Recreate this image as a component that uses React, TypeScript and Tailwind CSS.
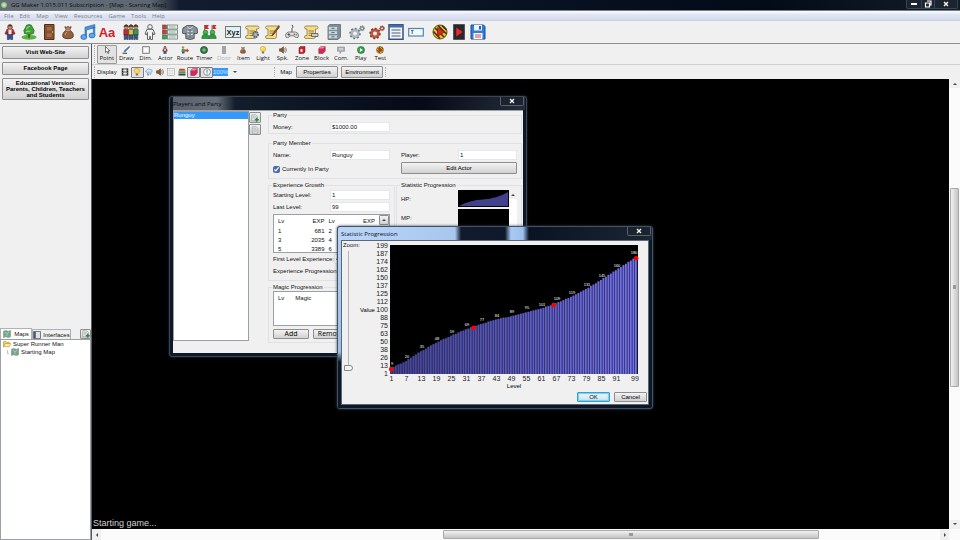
import React, { useState } from 'react';

type IconProps = { name: string; className?: string }

// All of the toolbar art, drawn on a 16x16 grid
const ART: Record<string, React.ReactNode> = {
  actor: (
    <>
      <path d="M5 5.200h6l2 4.600-1.500.6-1-2.200V11H5.500V8.200l-1 2.200-1.500-.6z" fill="#d8262a" stroke="#4a1818" strokeWidth=".6" />
      <path d="M6.500 5.200h3V11h-3z" fill="#e8ecf2" />
      <path d="M5.400 10.500h5.200v5H8.700l-.7-3-.7 3H5.400z" fill="#2e559c" stroke="#1b2b50" strokeWidth=".6" />
      <circle cx="8" cy="2.900" r="2.300" fill="#d89a74" stroke="#3b2317" strokeWidth=".7" />
      <path d="M5.700 2.500Q8-1 10.300 2.500z" fill="#56321e" />
    </>
  ),
  tree: (
    <>
      <ellipse cx="8" cy="13.300" rx="7.500" ry="2.500" fill="#52b544" />
      <path d="M7 9h2v5H7z" fill="#7b4b24" />
      <path d="M3.500 9.500Q1.800 6 4.400 3.800 5 .5 8 .5t3.600 3.300Q14.200 6 12.500 9.500 8 11.800 3.500 9.500z" fill="#3fa33a" stroke="#1e6424" strokeWidth=".7" />
      <path d="M5.500 5Q6.500 2.300 9 2.500M5 8q2-1.500 4-.5" stroke="#93dc70" strokeWidth="1.200" fill="none" />
    </>
  ),
  door: (
    <>
      <path d="M3.500.5h9.500v15H3.500z" fill="#8b5734" stroke="#4f2d18" />
      <path d="M5.300 2.500h5.900v4.500H5.300zM5.300 8.800h5.900v4.800H5.300z" fill="#a46c43" stroke="#69402a" strokeWidth=".6" />
      <circle cx="11.600" cy="8" r=".8" fill="#e9cb58" />
    </>
  ),
  doorOff: <path d="M4 0h8v16H4z" fill="#a5a5a5" />,
  bag: (
    <>
      <path d="M6.300 6Q1.500 9.500 3 13q1 1.700 5 1.700t5-1.700Q14.500 9.500 9.700 6z" fill="#94613f" stroke="#4c2b1a" strokeWidth=".8" />
      <path d="m6.200 6-1.400-3.300 2 .6L8 2.200l1.200 1.100 2-.6L9.800 6z" fill="#b98259" stroke="#4c2b1a" strokeWidth=".7" />
      <path d="M6 6.200h4" stroke="#e3c9a0" strokeWidth="1" />
      <path d="M5 11q.5-2 2-2.800" stroke="#d1a27c" fill="none" />
    </>
  ),
  music: (
    <>
      <path d="M5 3.200 14.800.5v3.200L6.500 6v7H5zM13.300 3h1.500v8.500h-1.500z" fill="#4c94dc" stroke="#1d5fae" strokeWidth=".6" />
      <ellipse cx="3.800" cy="13" rx="3" ry="2.400" fill="#5ba9ee" stroke="#1d5fae" strokeWidth=".7" />
      <ellipse cx="12" cy="11.500" rx="3" ry="2.400" fill="#5ba9ee" stroke="#1d5fae" strokeWidth=".7" />
    </>
  ),
  font: <text x="8" y="12.500" textAnchor="middle" fontSize="13" fontWeight="bold" fill="#cf2228" fontFamily="Liberation Sans, sans-serif">Aa</text>,
  party: (
    <>
      {[3.200, 8, 12.800].map((x, i) => (
        <g key={x} stroke="#2f2622" strokeWidth=".5">
          <circle cx={x} cy="3" r="2.100" fill="#d5986e" />
          <path d={`M${x - 2.400} 5.500h4.800V11h-4.800z`} fill={['#c8282b', '#e4c33c', '#35975b'][i]} />
          <path d={`M${x - 2} 11h4v4.500h-1.500l-.5-2.500-.5 2.500h-1.500z`} fill="#355da2" />
          <path d={`M${x - 2.100} 2.400q2.100-3.500 4.200 0z`} fill="#5b3420" />
        </g>
      ))}
    </>
  ),
  pose: (
    <g fill="#f1f1f1" stroke="#555" strokeWidth=".9">
      <circle cx="8" cy="2.900" r="2.300" />
      <path d="M5 5.300h6l2 4.800-1.500.6-1-2.200v7H8.700L8 12l-.7 3.500H5.500v-7l-1 2.200-1.500-.6z" />
    </g>
  ),
  stats: (
    <>
      {[1, 6, 11].map((y, i) => (
        <g key={y}>
          <rect x=".5" y={y} width="4" height="4" fill={['#d33', '#d33', '#41a948'][i]} stroke="#4a5552" strokeWidth=".6" />
          <rect x="5.500" y={y} width="10" height="4" fill="#e3f0e8" stroke="#6b7673" strokeWidth=".8" />
          <path d={`M7 ${y + 2}h6.500`} stroke="#8fb8a0" strokeWidth="1" />
        </g>
      ))}
    </>
  ),
  armor: (
    <>
      <path d="M5 1.500h6l4 2.500.8 5-3 1-.6-1v5.500q-4.200 2-8.400 0V9l-.6 1-3-1L1 4z" fill="#87929a" stroke="#3c464c" strokeWidth=".8" />
      <path d="M5 2.500 8 5l3-2.500M5 7q3 2 6 0M5 10q3 2 6 0" stroke="#d2dce2" strokeWidth="1" fill="none" />
      <path d="M8 5v9" stroke="#4c585f" strokeWidth=".7" />
    </>
  ),
  teams: (
    <>
      <path d="M3.500 1v8M11 1v8" stroke="#555" strokeWidth=".8" />
      <path d="M4 1h4L6.500 3 8 5H4z" fill="#d7262b" />
      <path d="M11.500 1h4L14 3l1.500 2h-4z" fill="#d7262b" />
      <circle cx="4.500" cy="8.300" r="2.300" fill="#45b74c" stroke="#1f6c2c" strokeWidth=".6" />
      <circle cx="11.500" cy="8.300" r="2.300" fill="#45b74c" stroke="#1f6c2c" strokeWidth=".6" />
      <path d="M.8 14.500q0-4.500 3.700-4.500T8 14.500q0-4.500 3.500-4.500t3.700 4.500z" fill="#2e9a3a" stroke="#1f6c2c" strokeWidth=".6" />
    </>
  ),
  xyz: (
    <>
      <rect x=".5" y="2.500" width="15" height="11" fill="#e3f0f4" stroke="#6a7980" />
      <text x="8" y="10.800" textAnchor="middle" fontSize="7.500" fontWeight="bold" fill="#222" fontFamily="Liberation Sans, sans-serif">Xyz</text>
    </>
  ),
  scroll: (
    <>
      <path d="M3 2h10.500q1.500 0 1.500 1.500T13.500 5h-1v7.500q0 2-2 2H3q-1.500 0-1.500-1.500T3 11.500h1V5H3Q1.500 4.800 1.500 3.500T3 2z" fill="#f3dc8a" stroke="#8f763c" strokeWidth=".8" />
      <path d="M5.500 7h5.500M5.500 9.200h5.500M5.500 11.500h3.500" stroke="#8b7136" strokeWidth=".9" />
    </>
  ),
  gear: (
    <>
      <circle cx="6" cy="9.500" r="3.500" fill="none" stroke="#a9b8be" strokeWidth="3" />
      <circle cx="6" cy="9.500" r="5" fill="none" stroke="#66767d" strokeWidth="1.500" strokeDasharray="1.800 2" />
      <circle cx="13" cy="4.300" r="1.600" fill="none" stroke="#7f9097" strokeWidth="1.400" />
      <circle cx="13" cy="4.300" r="2.400" fill="none" stroke="#5c6c73" strokeWidth="1" strokeDasharray="1 1" />
    </>
  ),
  gearRed: (
    <>
      <circle cx="6" cy="9.500" r="3.500" fill="none" stroke="#c0573c" strokeWidth="3" />
      <circle cx="6" cy="9.500" r="5" fill="none" stroke="#74352a" strokeWidth="1.500" strokeDasharray="1.800 2" />
      <circle cx="13" cy="4.300" r="1.600" fill="none" stroke="#a9543c" strokeWidth="1.400" />
      <circle cx="13" cy="4.300" r="2.400" fill="none" stroke="#6e4a3c" strokeWidth="1" strokeDasharray="1 1" />
    </>
  ),
  joystick: (
    <>
      <path d="M8 8V4.500Q10 3.500 8 .8" stroke="#555" strokeWidth="1" fill="none" />
      <path d="M4.500 8h7q3 .8 3 3.500t-2 2q-1.500.3-2.500-1.700H6q-1 2-2.500 1.700-2 .5-2-2T4.500 8z" fill="#d9dddd" stroke="#596264" strokeWidth=".8" />
      <path d="M4.800 9.200v2.600M3.500 10.500h2.600" stroke="#444" strokeWidth=".9" />
      <circle cx="10.400" cy="10.300" r=".8" fill="#d6302d" />
      <circle cx="12.300" cy="10.800" r=".8" fill="#3a9c49" />
    </>
  ),
  cabinet: (
    <>
      <path d="M2 2 4 .5h10.500V13L12 15.500H2z" fill="#7f8e96" stroke="#5c696f" strokeWidth=".8" />
      {[2.500, 6.800, 11].map((y) => (
        <g key={y}>
          <rect x="2.500" y={y} width="9" height="3.700" fill="#c9d8df" stroke="#77868d" strokeWidth=".7" />
          <path d={`M5.500 ${y + 1.800}h3`} stroke="#56646b" />
        </g>
      ))}
    </>
  ),
  listBox: (
    <>
      <rect x="1" y=".8" width="14" height="14.500" fill="#eef4fb" stroke="#34507f" strokeWidth="1.500" />
      <path d="M1 1h14v2.500H1z" fill="#3a6cb4" />
      <path d="M3.500 6h9M3.500 9h9M3.500 12h9" stroke="#555f70" strokeWidth="1.200" />
    </>
  ),
  textBox: (
    <>
      <rect x=".7" y="4.500" width="14.600" height="7.500" fill="#f4f9fe" stroke="#4a86bd" strokeWidth="1.200" />
      <path d="M3 6.500h2.500M4.200 6.500V10" stroke="#555" strokeWidth=".9" />
    </>
  ),
  playTest: (
    <>
      <circle cx="8" cy="8" r="7" fill="#f0c81e" stroke="#4b3d12" strokeWidth=".9" />
      <path d="M3 4l9 9M1.500 7.500l6.500 7M6 1.600l8.500 8.400M10 1.500l4.500 4.500" stroke="#33301f" strokeWidth="1.500" />
      <path d="M5.500 3.500 12.500 8l-7 4.500z" fill="#e02424" stroke="#7d1414" strokeWidth=".7" />
    </>
  ),
  playDark: (
    <>
      <path d="M2.500.5h11v15h-11z" fill="#26282d" stroke="#52555c" />
      <path d="M5.200 3.500 11.700 8l-6.500 4.500z" fill="#ee2424" />
    </>
  ),
  save: (
    <>
      <path d="M1 1h12.500L15 2.500V15H1z" fill="#2e7fd6" stroke="#1b4a93" />
      <path d="M4 1h8v5.500H4z" fill="#eef3fa" />
      <path d="M9 2h2v3.500H9z" fill="#2562ae" />
      <path d="M3.500 9h9v6h-9z" fill="#f7f7f7" />
      <path d="M5 11h6M5 13h6" stroke="#d43a35" strokeWidth=".9" />
    </>
  ),
  pointer: <path d="M5 1v12l3-2.500 2 4.500 2-1-2-4.300h3.800z" fill="#fff" stroke="#333" strokeWidth="1.300" />,
  draw: (
    <>
      <path d="M14.500.5 15.500 2 7 11l-3 1 1-3z" fill="#3d7ac4" stroke="#274a7a" strokeWidth=".8" />
      <path d="M1 14.500h9" stroke="#333" strokeWidth="2" />
    </>
  ),
  dim: <rect x="1.500" y="1.500" width="13" height="13" fill="#fafafa" stroke="#5c5c5c" strokeWidth="1.600" />,
  route: (
    <>
      <circle cx="4" cy="3" r="2.500" fill="#c2834f" />
      <path d="M1.500 6H7l1 6H1z" fill="#3e9e4a" />
      <path d="M7 7h5V5l4 4-4 4v-2H7z" fill="#d2362e" />
      <path d="M2 12h5v3H2z" fill="#34558f" />
    </>
  ),
  timer: (
    <>
      <circle cx="8" cy="8" r="7" fill="#2f7446" stroke="#31413a" strokeWidth="1.500" />
      <path d="M8 3.500v9M3.500 8h9" stroke="#6fdc76" strokeWidth="2" />
    </>
  ),
  light: (
    <>
      <path d="M8 .7q5.500 0 5.500 5.300 0 2.500-3 5h-5q-3-2.500-3-5Q2.500.7 8 .7z" fill="#fbd54c" stroke="#b68a24" strokeWidth=".9" />
      <path d="M5.700 11h4.600v4H5.700z" fill="#777" />
      <path d="M5.500 5q.5-2 2.500-2.300" stroke="#fff" strokeWidth="1.400" fill="none" />
    </>
  ),
  speaker: (
    <>
      <path d="M1 5.500h3L9 1.500v13l-5-4H1z" fill="#87582f" stroke="#46301e" />
      <path d="M11 4.500q2.500 3.500 0 7M13 2.500q4 5.500 0 11" stroke="#555" strokeWidth="1.300" fill="none" />
    </>
  ),
  zone: (
    <>
      <path d="M2 3.500 5.500.8H14V12l-3 3.200H2z" fill="#c52127" stroke="#6b1216" />
      <path d="M5 6h4v6H5z" fill="#fbe4e4" />
    </>
  ),
  block: (
    <>
      <path d="M1.500 5 6 1h8.500v9L10 15H1.500z" fill="#d22a55" stroke="#8e1c3f" />
      <path d="M1.500 5 6 1h8.500L10 5z" fill="#f08aa4" />
    </>
  ),
  comment: (
    <>
      <path d="M1 2h14v8.500H9L6 15v-4.500H1z" fill="#a9b3bb" stroke="#727c83" />
      <path d="M4 5h8M4 7.500h8" stroke="#f2f2f2" />
    </>
  ),
  play: (
    <>
      <circle cx="8" cy="8" r="7.200" fill="#2da043" stroke="#1a6b2d" />
      <path d="M5.700 4 12 8l-6.300 4z" fill="#fff" />
    </>
  ),
  film: (
    <>
      <path d="M3 .5v15M13 .5v15" stroke="#222" strokeWidth="3" />
      <path d="M3 2h10M3 8h10M3 14h10" stroke="#222" strokeWidth="1.500" />
      <path d="M3 1v15M13 1v15" stroke="#ddd" strokeDasharray="1.500 2" />
    </>
  ),
  weather: (
    <>
      <path d="M2 8.500Q0 5 4 4q2-3.500 6-1.500 4.500 0 4.500 3.500 0 2-2 2.500z" fill="#d8e7f7" stroke="#5d8dc6" strokeWidth="1.200" />
      <path d="M5 10v4M8 10.500l-2 5M12 10l-2 4" stroke="#3f86d1" strokeWidth="1.500" />
    </>
  ),
  grid: (
    <>
      <rect x="1" y="1" width="14" height="14" fill="#fff" stroke="#8c8c8c" />
      <path d="M5.500 1v14M10.500 1v14M1 5.500h14M1 10.500h14" stroke="#b9b9b9" />
    </>
  ),
  layers: (
    <>
      <path d="M3 1.500h10l2 4H1z" fill="#de3830" />
      <path d="M1 6.500h14v3.500H1z" fill="#3ba349" />
      <path d="M1 11h14v4H1z" fill="#37404b" />
    </>
  ),
  info: (
    <>
      <circle cx="8" cy="8" r="6.800" fill="#f5f8fa" stroke="#596671" strokeWidth="1.300" />
      <path d="M8 3.500v6M8 11v2" stroke="#44545f" strokeWidth="1.600" />
    </>
  ),
  map: (
    <>
      <path d="M.8 2.500 5 1l6 1.500L15.200 1v12.500L11 15l-6-1.500L.8 15z" fill="#5aa7dd" stroke="#b08b3a" strokeWidth="1.300" />
      <path d="M3 7q3-2 5 0t5 0v4q-3 2-5-.5t-5 .5z" fill="#68b552" />
      <path d="m4 4 4 4 4-4M8 8v4" stroke="#f3d25e" strokeWidth="1.300" fill="none" />
    </>
  ),
  iface: (
    <>
      <path d="M1 1h14v14H1z" fill="#d7e4ee" stroke="#444d55" strokeWidth="1.400" />
      <path d="M1.500 1.500h4v13h-4z" fill="#45525c" />
      <path d="M3 3.500h1M3 6.500h1M3 9.500h1" stroke="#e15349" strokeWidth="1.500" />
    </>
  ),
  folder: (
    <>
      <path d="M1 13.500V3h5l1.500 2H13v2" fill="#f5d56c" stroke="#a67c20" />
      <path d="M1 13.500 4 7h11.500l-3 6.500z" fill="#fce99b" stroke="#a67c20" />
    </>
  ),
  page: (
    <>
      <path d="M2.500 1.500h8l3 3v10h-11z" fill="#e6ecec" stroke="#76807f" />
      <path d="M4.500 5.500h6M4.500 8h7M4.500 10.500h7" stroke="#87918f" />
    </>
  ),
  pageAdd: (
    <>
      <path d="M1.500 1.500h8l3 3v9h-11z" fill="#e6ecec" stroke="#76807f" />
      <path d="M3.500 5.500h6M3.500 8h6" stroke="#87918f" />
      <path d="M11.500 7.500v8M7.500 11.500h8" stroke="#2c8a38" strokeWidth="2.800" />
    </>
  ),
}

// Scroll variants share the same parchment
ART.scrollGear = (
  <>
    {ART.scroll}
    <circle cx="11.500" cy="10.500" r="2.500" fill="#a9b8be" stroke="#55646b" strokeWidth="2" strokeDasharray="1.500 .6" />
  </>
)
ART.scrollPen = (
  <>
    {ART.scroll}
    <path d="M14.800 1.500 9 9.500l-1 2 2-1.200L15.600 2.500z" fill="#9a5a2b" stroke="#4e2d16" strokeWidth=".6" />
  </>
)
ART.scrollKey = (
  <>
    {ART.scroll}
    <path d="M8.500 9.500h6.500v3H8.500z" fill="#c7ced1" stroke="#555" strokeWidth=".8" />
  </>
)

function Icon({ name, className = 'w-4 h-4' }: IconProps) {
  return (
    <svg viewBox="0 0 16 16" className={`shrink-0 ${className}`} aria-hidden="true">
      {ART[name]}
    </svg>
  )
}

const MENUS = ['File', 'Edit', 'Map', 'View', 'Resources', 'Game', 'Tools', 'Help']

const TOOL_GROUPS = [
  { width: 'w-[117px]', items: ['actor', 'tree', 'door', 'bag', 'music', 'font'] },
  { width: 'w-[98px]', items: ['party', 'pose', 'stats', 'armor', 'teams'] },
  { width: 'w-[98px]', items: ['xyz', 'scrollGear', 'scrollPen', 'joystick', 'scrollKey'] },
  { width: 'w-[18px]', items: ['cabinet'] },
  { width: 'w-[79px]', items: ['gear', 'gearRed', 'listBox', 'textBox'] },
  { width: 'w-[58px]', items: ['playTest', 'playDark', 'save'] },
]

const MAP_TOOLS = [
  ['pointer', 'Point'],
  ['draw', 'Draw'],
  ['dim', 'Dim.'],
  ['actor', 'Actor'],
  ['route', 'Route'],
  ['timer', 'Timer'],
  ['doorOff', 'Door'],
  ['bag', 'Item'],
  ['light', 'Light'],
  ['speaker', 'Spk.'],
  ['zone', 'Zone'],
  ['block', 'Block'],
  ['comment', 'Com.'],
  ['play', 'Play'],
  ['playTest', 'Test'],
]

const DISPLAY_TOGGLES = [
  { icon: 'film', on: false },
  { icon: 'light', on: true },
  { icon: 'weather', on: false },
  { icon: 'speaker', on: false },
  { icon: 'grid', on: false },
  { icon: 'layers', on: false },
  { icon: 'block', on: true },
  { icon: 'info', on: true },
]

const EXP_ROWS = [
  [1, 681, 2],
  [3, 2035, 4],
  [5, 3389, 6],
]

// [level, value] samples of the HP curve
const CURVE = [
  [1, 9], [7, 20], [13, 35], [19, 48], [25, 59], [31, 69], [37, 77], [43, 84], [49, 89],
  [55, 95], [61, 101], [67, 109], [73, 119], [79, 131], [85, 145], [91, 160], [99, 180],
]
const VALUE_TICKS = [199, 187, 174, 162, 150, 137, 125, 112, 100, 88, 75, 63, 50, 38, 26, 13, 1]
const HANDLES = [1, 34, 66, 99]

const valueAt = (level: number) => {
  const i = Math.max(1, CURVE.findIndex(([l]) => l >= level))
  const [l0, v0] = CURVE[i - 1]
  const [l1, v1] = CURVE[i]
  return Math.round(v0 + ((v1 - v0) * (level - l0)) / (l1 - l0))
}

const BUTTON = 'border border-[#8e8e8e] rounded-[1px] bg-linear-to-b from-[#f3f3f3] to-[#d2d2d2] text-black flex items-center justify-center'
const FIELD = 'h-[10px] bg-white border border-[#e3e6ea] px-px text-[6px] leading-[8px] min-w-0'

function Grip() {
  return <span className="w-[2px] self-stretch my-px border-l border-dotted border-[#a9adb8] shrink-0" />
}

function Arrow({ dir }: { dir: 'up' | 'down' | 'left' | 'right' }) {
  const paths = { up: 'M1 4 3 2l2 2z', down: 'M1 2l2 2 2-2z', left: 'M4 1 2 3l2 2z', right: 'M2 1l2 2-2 2z' }
  return (
    <svg viewBox="0 0 6 6" className="w-[6px] h-[6px]" aria-hidden="true">
      <path d={paths[dir]} fill="#444" />
    </svg>
  )
}

function Group({ title, className = '', children }: { title: string; className?: string; children: React.ReactNode }) {
  return (
    <section className={className}>
      <div className="flex items-center gap-px h-[8px]">
        <span className="w-1 h-px bg-[#dfe1e4]" />
        <h3 className="text-[6px] leading-[8px] whitespace-nowrap">{title}</h3>
        <span className="flex-1 h-px bg-[#dfe1e4]" />
      </div>
      <div className="border border-t-0 border-[#dfe1e4] -mt-1 pt-1 px-1">{children}</div>
    </section>
  )
}

function Field({ id, label, value }: { id: string; label: string; value: string }) {
  return (
    <div className="flex items-center h-[12px]">
      <label htmlFor={id} className="min-w-[57px] shrink-0 whitespace-nowrap">{label}</label>
      <input id={id} defaultValue={value} className={`${FIELD} flex-1`} />
    </div>
  )
}

function CloseButton() {
  return (
    <button aria-label="Close" className="w-[24px] h-[9px] mr-px self-start rounded-b-[2px] border border-t-0 border-[#59606d] bg-[#1b2230] flex items-center justify-center">
      <svg viewBox="0 0 6 6" className="w-[6px] h-[6px]" aria-hidden="true">
        <path d="m1 1 4 4M5 1 1 5" stroke="#fff" strokeWidth="1.300" />
      </svg>
    </button>
  )
}

function StatisticChart() {
  const levels = Array.from({ length: 99 }, (_, i) => i + 1)
  const x = (level: number) => 34 + (level - 1) * 2.5
  const y = (value: number) => 133 - (value / 199) * 129
  return (
    <svg viewBox="0 0 286 150" className="w-[286px] h-[150px] shrink-0 font-['Liberation_Sans',sans-serif]" role="img" aria-label="Value by level">
      <rect x="33" y="4" width="248" height="129" fill="#000" />
      <g transform="translate(-1 0)">
        {levels.map((level) => {
          const top = y(valueAt(level))
          const k = level / 99
          const fill = `rgb(${Math.round(66 + 50 * k)}, ${Math.round(66 + 48 * k)}, ${Math.round(140 + 92 * k)})`
          return (
            <g key={level}>
              <rect x={x(level)} y={top} width="2.500" height={133 - top} fill="#2b2b62" />
              <rect x={x(level)} y={top} width="1.700" height={133 - top} fill={fill} />
            </g>
          )
        })}
        {HANDLES.map((level) => (
          <circle key={level} cx={x(level) + 1.2} cy={y(valueAt(level)) + 1} r="2.300" fill="#f00" />
        ))}
      </g>
      <g fontSize="4" fill="#fff" textAnchor="middle">
        {CURVE.map(([level, value]) => (
          <text key={level} x={level === 99 ? 277 : x(level) + 1} y={y(value) - 3}>{value}</text>
        ))}
      </g>
      <g fontSize="7" fill="#222">
        {VALUE_TICKS.map((tick, i) => (
          <text key={tick} x="31" y={6.500 + i * 8.06} textAnchor="end">{tick}</text>
        ))}
        {CURVE.map(([level]) => (
          <text key={level} x={level === 99 ? 278 : x(level) + .5} y="140" textAnchor="middle">{level}</text>
        ))}
      </g>
      <g fontSize="6" fill="#000">
        <text x="3" y="71">Value</text>
        <text x="157" y="147" textAnchor="middle">Level</text>
      </g>
    </svg>
  )
}

function StatisticDialog() {
  const [zoom, setZoom] = useState(0)
  return (
    <div role="dialog" aria-label="Statistic Progression" className="absolute left-[245px] top-[147px] w-[316px] rounded-[3px] border border-[#48525f] bg-[#0d1827] shadow-[0_0_3px_#30405a]">
      <div className="h-[13px] flex items-center justify-between pl-[3px] rounded-t-[2px] bg-[linear-gradient(90deg,#b9d6fa_0,#a9c6ee_117px,#111b2d_123px,#0e192b_167px,#a9caf5_173px,#9dbfec_185px,#0a1321_191px,#1b2534_100%)]">
        <h2 className="font-['Open_Sans',sans-serif] text-[6px] leading-[8px] text-[#111]">Statistic Progression</h2>
        <CloseButton />
      </div>
      <div className="pb-[3px] pr-[3px] pl-[3px] bg-[linear-gradient(#b3d1f8_0,#9dbce6_112px,#0d1827_122px)] bg-[length:3px_100%] bg-no-repeat">
        <div className="bg-[#f0f0f0] border border-[#5c6878] pb-[2px]">
          <div className="flex">
            <div className="flex flex-col gap-[2px] w-[15px] pl-px">
              <label htmlFor="zoom" className="leading-[8px]">Zoom:</label>
              <input
                id="zoom"
                type="range"
                min="0"
                max="100"
                value={zoom}
                onChange={(e) => setZoom(Number(e.target.value))}
                className="appearance-none w-[10px] h-[120px] [writing-mode:vertical-lr] [direction:rtl] bg-[linear-gradient(#b5b5b5,#b5b5b5)] bg-[length:1px_100%] bg-center bg-no-repeat [&::-webkit-slider-thumb]:appearance-none [&::-webkit-slider-thumb]:w-[9px] [&::-webkit-slider-thumb]:h-[6px] [&::-webkit-slider-thumb]:bg-[#f4f4f4] [&::-webkit-slider-thumb]:border [&::-webkit-slider-thumb]:border-[#888] [&::-webkit-slider-thumb]:rounded-r-[3px]"
              />
            </div>
            <StatisticChart />
          </div>
          <div className="flex justify-end gap-1 pr-px pt-px">
            <button className="w-[33px] h-[10px] text-[6px] leading-[8px] border border-[#3c9fc9] rounded-[1px] bg-linear-to-b from-[#eef6fa] to-[#cde2ec] shadow-[inset_0_0_1px_1px_#6ad0f2]">OK</button>
            <button className={`${BUTTON} w-[33px] h-[10px] text-[6px] leading-[8px]`}>Cancel</button>
          </div>
        </div>
      </div>
    </div>
  )
}

function MiniStat({ label, filled }: { label: string; filled: boolean }) {
  return (
    <div className="flex items-center">
      <span className="w-[57px]">{label}</span>
      <svg viewBox="0 0 51 17" className="w-[51px] h-[17px]" aria-hidden="true">
        <path d="M0 0h51v17H0z" fill="#000" />
        {filled && <path d="M1 16Q12 10 25 9.500T50 2v14z" fill="#41418c" />}
      </svg>
    </div>
  )
}

function PlayersDialog() {
  const [inParty, setInParty] = useState(true)
  return (
    <div role="dialog" aria-label="Players and Party" className="absolute left-[77px] top-[17px] w-[358px] rounded-[3px] border border-[#3c4552] bg-[#0e1828] px-[3px] pb-[3px] shadow-[0_0_2px_#30405a]">
      <div className="h-[13px] flex items-center justify-between -mr-[2px] bg-[linear-gradient(90deg,#5a626f_0,#666e7a_44px,#141d2b_62px,#040a16_250px,#252d3a_100%)]">
        <h2 className="font-['Open_Sans',sans-serif] text-[6px] leading-[8px] text-[#0a0a0a]">Players and Party</h2>
        <CloseButton />
      </div>
      <div className="bg-[#f0f0f0] border-t border-[#9aa0aa] flex items-start pb-[10px]">
        <ul className="w-[76px] h-[230px] shrink-0 bg-white border border-[#9b9fa6]">
          <li className="bg-[#3399ff] text-white leading-[7px]">Runguy</li>
        </ul>
        <div className="flex flex-col gap-px pt-px shrink-0">
          <button aria-label="Add player" className={`${BUTTON} w-[12px] h-[11px]`}><Icon name="pageAdd" className="w-2 h-2" /></button>
          <button aria-label="Copy player" className={`${BUTTON} w-[12px] h-[11px]`}><Icon name="page" className="w-2 h-2" /></button>
        </div>
        <div className="flex-1 min-w-0 pl-[7px] pr-px">
          <Group title="Party">
            <div className="w-[117px] pt-[2px]"><Field id="money" label="Money:" value="$1000.00" /></div>
          </Group>
          <Group title="Party Member" className="mt-[5px]">
            <div className="flex gap-[11px] pt-[2px] pb-[2px]">
              <div className="w-[117px] flex flex-col gap-px">
                <Field id="name" label="Name:" value="Runguy" />
                <label className="flex items-center gap-[2px] h-[14px]">
                  <input
                    type="checkbox"
                    checked={inParty}
                    onChange={() => setInParty(!inParty)}
                    className="w-[7px] h-[7px] accent-[#4a6da8]"
                  />
                  Currently In Party
                </label>
              </div>
              <div className="w-[116px] flex flex-col gap-px">
                <Field id="player" label="Player:" value="1" />
                <button className={`${BUTTON} h-[12px]`}>Edit Actor</button>
              </div>
            </div>
          </Group>
          <div className="flex gap-px pt-[2px]">
            <div className="w-[127px] shrink-0">
              <Group title="Experience Growth">
                <Field id="start-level" label="Starting Level:" value="1" />
                <Field id="last-level" label="Last Level:" value="99" />
                <div className="h-[39px] mt-px bg-white border border-[#9b9fa6] flex overflow-hidden">
                  <table className="flex-1 border-collapse self-start">
                    <thead>
                      <tr className="h-[11px]">
                        {['Lv', 'EXP', 'Lv', 'EXP'].map((h, i) => (
                          <th key={i} className={i % 2 ? 'p-0 font-normal text-right w-[34px]' : 'p-0 font-normal text-left pl-[4px] w-[16px]'}>{h}</th>
                        ))}
                      </tr>
                    </thead>
                    <tbody>
                      {EXP_ROWS.map((row) => (
                        <tr key={row[0]} className="h-[9px]">
                          {row.map((cell, i) => (
                            <td key={i} className={i % 2 ? 'p-0 text-right' : 'p-0 pl-[4px]'}>{cell}</td>
                          ))}
                          <td />
                        </tr>
                      ))}
                    </tbody>
                  </table>
                  <div className="w-[10px] ml-[4px] bg-[#f3f3f3]">
                    <button aria-label="Scroll up" className={`${BUTTON} w-full h-[10px]`}><Arrow dir="up" /></button>
                  </div>
                </div>
                <Field id="first-exp" label="First Level Experience:" value="4" />
                <Field id="exp-prog" label="Experience Progression:" value="67" />
                <div className="h-[3px]" />
              </Group>
              <Group title="Magic Progression" className="mt-[2px]">
                <div className="h-[35px] bg-white border border-[#9b9fa6] flex gap-[11px] px-[4px] pt-[2px]">
                  <span>Lv</span>
                  <span>Magic</span>
                </div>
                <div className="flex gap-1 pt-[3px] pb-[3px] font-['Open_Sans',sans-serif] text-[7px]">
                  <button className={`${BUTTON} w-[36px] h-[10px]`}>Add</button>
                  <button className={`${BUTTON} w-[36px] h-[10px]`}>Remove</button>
                </div>
              </Group>
            </div>
            <Group title="Statistic Progression" className="flex-1 min-w-0">
              <div className="flex pt-px">
                <div className="flex flex-col gap-[2px]">
                  <MiniStat label="HP:" filled />
                  <MiniStat label="MP:" filled={false} />
                </div>
                <div className="w-[8px] bg-white">
                  <button aria-label="Scroll statistics up" className="w-[8px] h-[9px] bg-[#f0f0f0] flex items-center justify-center"><Arrow dir="up" /></button>
                </div>
              </div>
            </Group>
          </div>
        </div>
      </div>
    </div>
  )
}

function Sidebar() {
  return (
    <aside className="w-[91px] shrink-0 flex flex-col bg-[#f0f0f0]">
      <div className="flex flex-col gap-[3px] p-[2px] font-bold text-[6px] leading-[7px]">
        <button className={`${BUTTON} h-[13px]`}>Visit Web-Site</button>
        <button className={`${BUTTON} h-[13px]`}>Facebook Page</button>
        <button className={`${BUTTON} h-[22px] leading-[6px]`}>
          Educational Version:<br />Parents, Children, Teachers<br />and Students
        </button>
      </div>
      <div className="flex-1" />
      <div className="h-[11px] flex items-end">
        <button className="h-[11px] w-[32px] bg-white border border-b-0 border-[#aeb2b8] flex items-center justify-center gap-[3px]">
          <Icon name="map" className="w-2 h-2" />Maps
        </button>
        <button className="h-[10px] w-[39px] border border-b-0 border-[#aeb2b8] flex items-center justify-center gap-[2px]">
          <Icon name="iface" className="w-2 h-2" />Interfaces
        </button>
        <button aria-label="Add map" className={`${BUTTON} w-[11px] h-[10px] ml-auto`}><Icon name="pageAdd" className="w-2 h-2" /></button>
      </div>
      <ul className="h-[201px] bg-white border border-[#9b9fa6] leading-[8px]">
        <li className="flex items-center gap-[2px] pl-[2px]"><Icon name="folder" className="w-2 h-2" />Super Runner Man</li>
        <li className="flex items-center gap-[2px] pl-[6px]">
          <span className="w-[2px] h-1 border-l border-b border-[#c5c5c5]" />
          <Icon name="map" className="w-2 h-2" />Starting Map
        </li>
      </ul>
    </aside>
  )
}

function MapToolbars() {
  const [tool, setTool] = useState('Point')
  return (
    <div className="bg-[#f0f0f0]">
      <div className="h-[21px] flex items-center pl-[2px] border-b border-[#cfcfcf] font-['Open_Sans',sans-serif]">
        <Grip />
        <div className="grid grid-cols-15 w-[293px] ml-px">
          {MAP_TOOLS.map(([icon, label]) => (
            <button
              key={label}
              onClick={() => setTool(label)}
              disabled={label === 'Door'}
              className={`h-[19px] flex flex-col items-center justify-center rounded-[1px] text-[6px] leading-[8px] disabled:text-[#b3b3b3] ${tool === label ? 'border border-[#9a9a9a] bg-[#e2e2e2]' : ''}`}
            >
              <Icon name={icon} className="w-2 h-2" />
              {label}
            </button>
          ))}
        </div>
      </div>
      <div className="h-[14px] flex items-center pl-[2px]">
        <Grip />
        <span className="pl-px w-[24px]">Display</span>
        <div className="flex w-[93px]">
          {DISPLAY_TOGGLES.map((t) => (
            <button
              key={t.icon}
              aria-label={t.icon}
              aria-pressed={t.on}
              className={`flex-1 h-[11px] flex items-center justify-center ${t.on ? 'border border-[#7e7e7e] rounded-[1px] bg-[#e2e2e2]' : ''}`}
            >
              <Icon name={t.icon} className="w-2 h-2" />
            </button>
          ))}
        </div>
        <label className="flex items-center gap-1">
          <select aria-label="Map zoom" className="appearance-none w-[15px] h-[8px] bg-[#3399ff] text-[#cfe6ff] text-[6px] leading-[8px]">
            <option>100%</option>
          </select>
          <Arrow dir="down" />
        </label>
        <div className="flex items-center gap-[2px] ml-[36px]">
          <Grip />
          <span className="w-[16px] text-center">Map</span>
          <button className={`${BUTTON} w-[42px] h-[12px]`}>Properties</button>
          <button className={`${BUTTON} w-[42px] h-[12px] ml-px`}>Environment</button>
          <Grip />
        </div>
      </div>
    </div>
  )
}

export default function App() {
  return (
    <div className="h-screen flex flex-col overflow-hidden bg-[#f0f0f0] text-[#111] text-[6px] leading-[8px] font-['Liberation_Sans',sans-serif]">
      <header className="h-[11px] flex items-center border-b border-[#777c84] bg-[linear-gradient(90deg,#666e7a_0,#5e6672_150px,#121c2e_180px,#0b1526_45%,#030a18_80%,#141c2a_100%)] font-['Open_Sans',sans-serif]">
        <span className="w-[6px] h-[6px] ml-px rounded-full bg-[radial-gradient(circle,#d8f5c9,#57a344)]" />
        <h1 className="pl-1 text-[6px] leading-[10px] text-[#0b0b0b]">GG Maker 1.015.011 Subscription - [Map - Starting Map]</h1>
        <div className="ml-auto mr-[2px] h-[9px] self-start flex border border-t-0 border-[#3a4351] rounded-b-[2px] bg-[#1c2431]">
          <button aria-label="Minimize" className="w-[14px] flex items-center justify-center">
            <span className="w-[6px] h-[2px] bg-white" />
          </button>
          <button aria-label="Restore" className="w-[14px] flex items-center justify-center border-x border-[#3a4351]">
            <svg viewBox="0 0 8 8" className="w-2 h-2" aria-hidden="true">
              <path d="M3 1h4v4H6M1.500 3h4v4h-4z" fill="none" stroke="#fff" strokeWidth="1.200" />
            </svg>
          </button>
          <button aria-label="Close window" className="w-[22px] flex items-center justify-center">
            <svg viewBox="0 0 6 6" className="w-[6px] h-[6px]" aria-hidden="true">
              <path d="m1 1 4 4M5 1 1 5" stroke="#fff" strokeWidth="1.300" />
            </svg>
          </button>
        </div>
      </header>

      <nav className="h-[10px] flex items-center gap-[6px] pl-1 border-b border-[#c9cfdd] bg-[linear-gradient(#fdfdff,#e1e6f4_40%,#d5dcee)] text-[#7b7e88] font-['Open_Sans',sans-serif]">
        {MENUS.map((m) => (
          <button key={m} className="leading-[8px]">{m}</button>
        ))}
      </nav>

      <div className="h-[23px] flex items-center gap-1 border-b border-[#8b8f88]">
        {TOOL_GROUPS.map((g, i) => (
          <div key={i} className={`${g.width} flex`}>
            {g.items.map((name) => (
              <button key={name} aria-label={name} className="flex-1 flex justify-center">
                <Icon name={name} />
              </button>
            ))}
          </div>
        ))}
      </div>

      <div className="flex-1 min-h-0 flex">
        <Sidebar />
        <main className="flex-1 min-w-0 flex flex-col border-l border-[#55585c]">
          <MapToolbars />
          <div className="flex-1 min-h-0 flex">
            <div className="relative flex-1 bg-black flex items-end">
              <p className="text-[9px] leading-[11px] pl-px text-[#cfcfcf]">Starting game...</p>
              <PlayersDialog />
              <StatisticDialog />
            </div>
            <div className="w-[11px] shrink-0 flex flex-col items-center bg-[#fbfbfb]">
              <button aria-label="Scroll map up" className="w-full h-[9px] bg-[#f0f0f0] flex items-center justify-center"><Arrow dir="up" /></button>
              <div className="flex-[100]" />
              <div className="flex-[198] w-[9px] rounded-[1px] border border-[#a9a9a9] bg-linear-to-r from-[#f2f2f2] to-[#c4c4c4] flex items-center justify-center">
                <span className="w-[3px] h-[4px] bg-[#999]" />
              </div>
              <div className="flex-[134]" />
              <button aria-label="Scroll map down" className="w-full h-[9px] bg-[#f0f0f0] flex items-center justify-center"><Arrow dir="down" /></button>
            </div>
          </div>
          <div className="h-[11px] flex items-center bg-[#fbfbfb] pr-[11px]">
            <button aria-label="Scroll map left" className="w-[9px] h-full bg-[#f0f0f0] flex items-center justify-center"><Arrow dir="left" /></button>
            <div className="flex-[344]" />
            <div className="flex-[376] h-[9px] rounded-[1px] border border-[#a9a9a9] bg-linear-to-b from-[#f2f2f2] to-[#c4c4c4] flex items-center justify-center">
              <span className="w-[4px] h-[3px] bg-[#999]" />
            </div>
            <div className="flex-[122]" />
            <button aria-label="Scroll map right" className="w-[9px] h-full bg-[#f0f0f0] flex items-center justify-center"><Arrow dir="right" /></button>
          </div>
        </main>
      </div>
    </div>
  )
}
